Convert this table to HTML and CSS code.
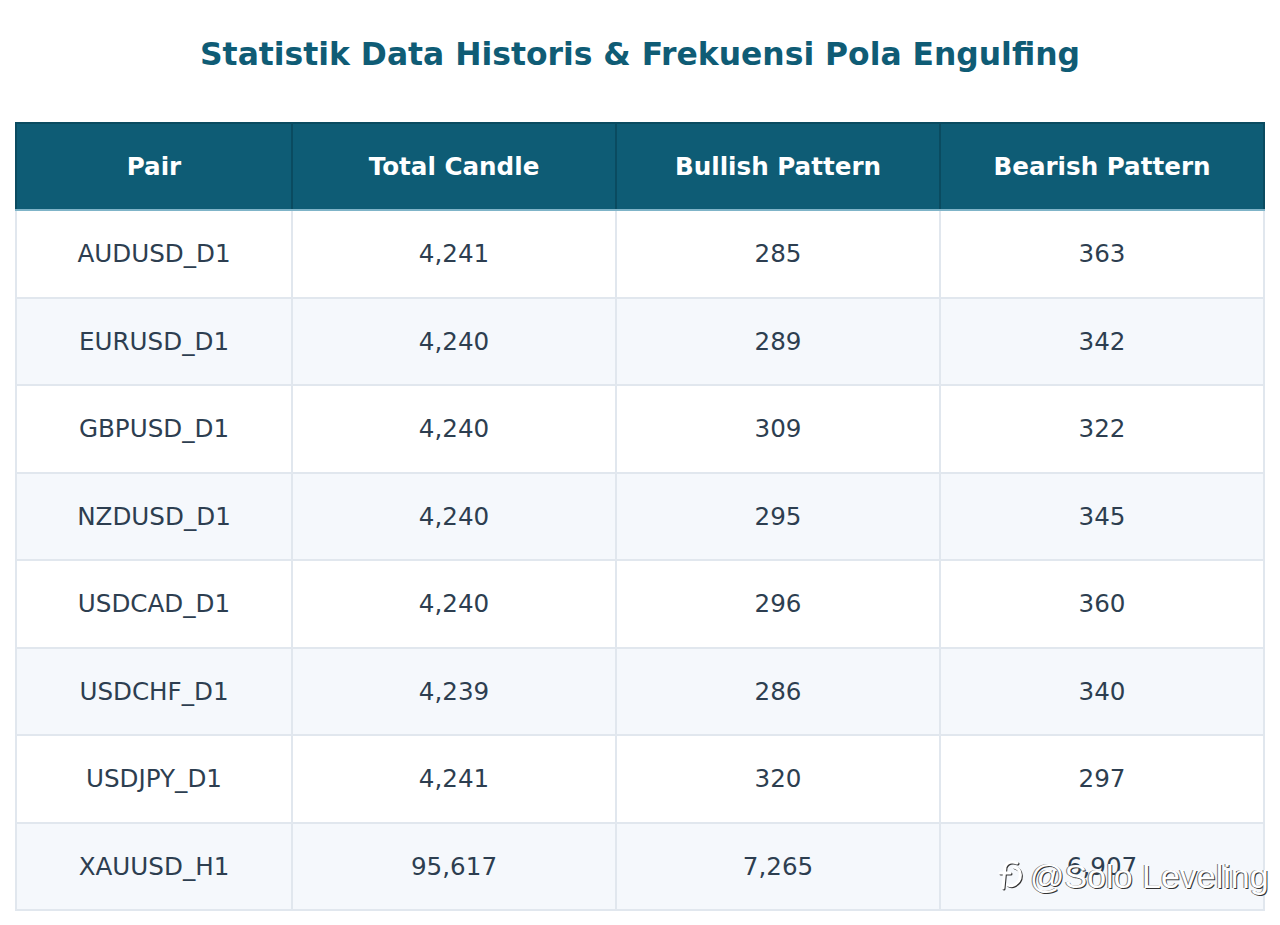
FILE: index.html
```html
<!DOCTYPE html>
<html>
<head>
<meta charset="utf-8">
<link rel="stylesheet" href="styles.css">
</head>
<body>
<div class="page">
  <h1 class="title">Statistik Data Historis &amp; Frekuensi Pola Engulfing</h1>
  <table class="stats">
    <thead>
      <tr>
        <th class="c1">Pair</th>
        <th>Total Candle</th>
        <th>Bullish Pattern</th>
        <th>Bearish Pattern</th>
      </tr>
    </thead>
    <tbody>
      <tr><td>AUDUSD_D1</td><td>4,241</td><td>285</td><td>363</td></tr>
      <tr><td>EURUSD_D1</td><td>4,240</td><td>289</td><td>342</td></tr>
      <tr><td>GBPUSD_D1</td><td>4,240</td><td>309</td><td>322</td></tr>
      <tr><td>NZDUSD_D1</td><td>4,240</td><td>295</td><td>345</td></tr>
      <tr><td>USDCAD_D1</td><td>4,240</td><td>296</td><td>360</td></tr>
      <tr><td>USDCHF_D1</td><td>4,239</td><td>286</td><td>340</td></tr>
      <tr><td>USDJPY_D1</td><td>4,241</td><td>320</td><td>297</td></tr>
      <tr><td>XAUUSD_H1</td><td>95,617</td><td>7,265</td><td>6,907</td></tr>
    </tbody>
  </table>
  <div class="watermark">
    <svg class="wm-logo" width="32" height="36" viewBox="0 0 32 36">
      <path d="M21 5 C16 3 11 4 9 9 L7 30 M4 15 H14 M18 9 C26 11 27 22 18 27 C16 28 14 28 12 27" fill="none" stroke="#fff" stroke-width="3" stroke-linecap="round"/>
    </svg>
    <span class="wm-text">@Solo Leveling</span>
  </div>
</div>
</body>
</html>
```
FILE: styles.css
```css
html, body {
  margin: 0;
  padding: 0;
  background: #ffffff;
}
.page {
  position: relative;
  width: 1280px;
  height: 925px;
  padding: 0 15px;
  box-sizing: border-box;
  font-family: "DejaVu Sans", sans-serif;
}
.title {
  margin: 0;
  padding-top: 34px;
  height: 87px;
  box-sizing: border-box;
  text-align: center;
  font-size: 31.4px;
  font-weight: bold;
  color: #0f5c75;
  line-height: 40px;
}
.stats {
  width: 1250px;
  border-collapse: collapse;
  table-layout: fixed;
  margin-top: 35px;
}
.stats th {
  background: #0e5c75;
  color: #ffffff;
  font-size: 24.6px;
  font-weight: bold;
  height: 85px;
  border: 2px solid #0a4b60;
  border-bottom: 2px solid #7fb4c8;
  text-align: center;
  padding: 0;
}
.stats th.c1 {
  width: 274px;
}
.stats td {
  font-size: 24.6px;
  color: #2d3e50;
  text-align: center;
  height: 85.5px;
  border: 2px solid #e1e7ee;
  padding: 0;
}
.stats tbody tr:nth-child(even) td {
  background: #f5f8fc;
}
.watermark {
  position: absolute;
  left: 996px;
  top: 856px;
  display: flex;
  align-items: center;
  gap: 2px;
}
.wm-logo {
  filter: drop-shadow(1px 1px 0 #333);
}
.wm-text {
  font-family: "Liberation Sans", sans-serif;
  font-size: 34px;
  color: #ffffff;
  text-shadow: 1px 1px 0 #333, -1px 0 0 #777;
  line-height: 40px;
}
```
